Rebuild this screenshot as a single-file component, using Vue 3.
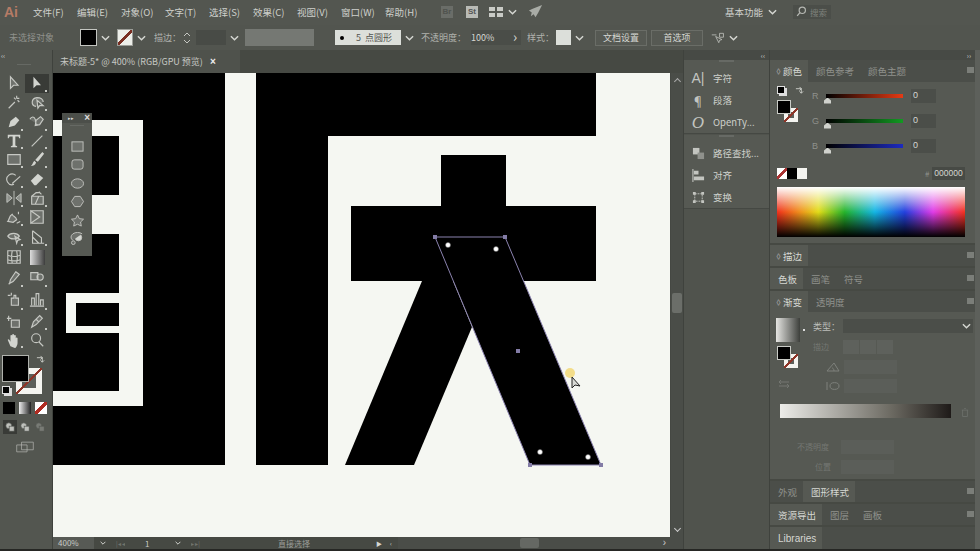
<script setup>
const menus = ['文件(F)','编辑(E)','对象(O)','文字(T)','选择(S)','效果(C)','视图(V)','窗口(W)','帮助(H)']
const shapes = ['rect', 'round', 'ell', 'hex', 'star', 'flare']
const rowHeights = [18.5, 19.5, 19.5, 18.5, 18.5, 20, 19.5, 18.5, 20.5, 20.5, 20.5, 22.5, 20.5, 18]
const toolRows = rowHeights.map((h) => h + 'px').join(' ')
const tools = [
  { d: 'M5 2v13l3.500-3.500h5z', g: 1 },
  { d: 'M5 2v13l3.500-3.500h5z', f: 1, on: 1, m: 1 },
  { d: 'M3 16L10 9M12 2v3M15 5h-3M15 9l-2-2M9 4l2 2', m: 0 },
  { d: 'M8 14c-6-1-6-9 1-10 4 0 7 2 7 5M9 7l1 9 2-3 4 0z', g: 1, m: 1 },
  { d: 'M3 15l2-7 6-5 4 4-5 6zM1 17l3-3', f: 1, m: 1 },
  { d: 'M1 6c2-4 5-3 6 0s0 7 3 6M7 13l1-6 5-4 3 3-4 6z', g: 1, m: 1 },
  { d: 'M2 2h14v4h-1l-1-2h-3.500v10l2 1v1h-7v-1l2-1V4H4L3 6H2z', f: 1, m: 1 },
  { d: 'M3 15L15 3', m: 1 },
  { d: 'M2 4h14v11H2z', g: 1, m: 1 },
  { d: 'M15 1l2 2-7 9-3-2zM6 11l2 2c-1 3-3 4-6 4 2-1 2-4 4-6z', f: 1, m: 1 },
  { d: 'M9 15a6 6 0 1 1 2-10M7 14l9-8', m: 1 },
  { d: 'M2 11l8-8 6 5-8 8H6z', f: 1, m: 1 },
  { d: 'M1 4l6 5-6 5zM9 1v16M17 4l-6 5 6 5z', r: 1, m: 1 },
  { d: 'M3 7h13v9H3zM3 7l5-4h4M11 7l-4 9M11 2l3 3', g: 1, m: 1 },
  { d: 'M2 14c2-2 1-6 5-8 1 3 4 2 5 6l-4 3zM14 3v3M12 16l4-2', g: 1, m: 1 },
  { d: 'M2 2h14v14H2zM2 2l10 7-10 7z', g: 1 },
  { d: 'M2 8a7 5 0 0 1 13 0 7 5 0 0 1-13 0zM10 8l6 4-3 1-1 3z', g: 1, m: 1 },
  { d: 'M4 2v14h13M4 2l10 8v6M4 9l7 7', m: 1 },
  { d: 'M2 2h14v14H2zM2 7c5 2 9 2 14 0M2 12c5 2 9 2 14 0M7 2c-1 5-1 9 0 14M12 2c1 5 1 9 0 14' },
  { grad: 1 },
  { d: 'M11 2l4 3-7 8-4 2 1-4zM3 16l2-2', g: 1, m: 1 },
  { d: 'M2 3h8v8H2zM9 8a3.500 3.500 0 1 0 7 0 3.500 3.500 0 0 0-7 0z', g: 1, m: 1 },
  { d: 'M2 5h3M6 2v3M6 15V8h3V5h2v3h3v8H6z', g: 1, m: 1 },
  { d: 'M3 16V8h3v8M8 16V3h3v13M13 16v-6h3v6M1 17h16', m: 1 },
  { d: 'M1 6h5M3 3v6M6 8h9v8H6z', g: 1 },
  { d: 'M3 16l2-6 7-7 3 3-7 7zM8 7l3 3', g: 1, m: 1 },
  { d: 'M5 16L2 9c0-1 1-1 2 0l1 2V4c0-1 2-1 2 0v4-5c0-1 2-1 2 0v5-4c0-1 2-1 2 0v5-2c0-1 2-1 2 0v5c0 3-2 6-3 6z', f: 1, m: 1 },
  { c: 1, d: 'M11 11l5 5' },
]
</script>

<template>
  <div class="app">
    <header class="menubar">
      <span class="logo">Ai</span>
      <nav class="menus"><span v-for="m in menus" :key="m">{{ m }}</span></nav>
      <div class="bridge"><span class="br">Br</span><span class="st">St</span></div>
      <svg class="grid-ic" viewBox="0 0 14 10"><path d="M0 0h6v4H0zM8 0h6v4H8zM0 6h6v4H0zM8 6h6v4H8z" fill="#c9cbc6"/></svg>
      <svg class="chev" viewBox="0 0 10 6"><path d="M1 1l4 4 4-4" /></svg>
      <svg class="rocket" viewBox="0 0 16 16"><path d="M15 1L5 5 1 7l3 2-1 4 3-2 2 3 3-5z" fill="#a9aca6"/></svg>
      <div class="spring"></div>
      <span class="workspace">基本功能</span>
      <svg class="chev" viewBox="0 0 10 6"><path d="M1 1l4 4 4-4" /></svg>
      <div class="search">
        <svg viewBox="0 0 14 14"><circle cx="8" cy="5.500" r="4" fill="none" stroke="#b5b7b2" stroke-width="1.500"/><path d="M5 8.500L1.500 12.500" stroke="#b5b7b2" stroke-width="1.700"/></svg>
        <span>搜索</span>
      </div>
    </header>

    <div class="control">
      <span class="c-label none-label">未选择对象</span>
      <span class="swatch-fill"></span>
      <svg class="chev" viewBox="0 0 10 6"><path d="M1 1l4 4 4-4" /></svg>
      <span class="swatch-stroke"></span>
      <svg class="chev" viewBox="0 0 10 6"><path d="M1 1l4 4 4-4" /></svg>
      <span class="c-label stroke-l">描边：</span>
      <svg class="stepper" viewBox="0 0 8 14"><path d="M1 5l3-3 3 3M1 9l3 3 3-3" /></svg>
      <span class="stroke-box"></span>
      <svg class="chev" viewBox="0 0 10 6"><path d="M1 1l4 4 4-4" /></svg>
      <span class="profile"></span>
      <span class="brush"><i></i>5&nbsp;&nbsp;点圆形</span>
      <svg class="chev" viewBox="0 0 10 6"><path d="M1 1l4 4 4-4" /></svg>
      <span class="c-label op-l">不透明度：</span>
      <span class="opacity">100%</span>
      <span class="op-arrow">›</span>
      <span class="c-label style-l">样式：</span>
      <span class="style-sw"></span>
      <svg class="chev" viewBox="0 0 10 6"><path d="M1 1l4 4 4-4" /></svg>
      <button class="btn doc">文档设置</button>
      <button class="btn pref">首选项</button>
      <svg class="align-ic" viewBox="0 0 18 14"><path d="M1 3h6M11 1h5v5h-5zM6 5l8 4-3 1-1 3z" fill="none" stroke="#c5c7c2"/></svg>
      <svg class="chev" viewBox="0 0 10 6"><path d="M1 1l4 4 4-4" /></svg>
    </div>

    <div class="main">
      <aside class="toolbar">
        <div class="collapse">‹‹<i></i></div>
        <div class="tools" :style="{ gridTemplateRows: toolRows }">
          <span v-for="(t, i) in tools" :key="i" class="tool" :class="{ active: t.on, more: t.m }">
            <span v-if="t.grad" class="mini-grad"></span>
            <svg v-else viewBox="0 0 18 18" :class="{ solid: t.f, grey: t.g, half: t.r }">
              <circle v-if="t.c" cx="8" cy="7" r="5" />
              <path :d="t.d" />
            </svg>
          </span>
        </div>
        <div class="fs-area">
          <span class="big-fill"></span>
          <span class="big-stroke"></span>
          <span class="mini-default"></span>
          <svg class="swap" viewBox="0 0 10 10"><path d="M1 3h6v5M5 1l2 2-2 2M5 6l2 2 2-2" /></svg>
        </div>
        <div class="mode-row">
          <span class="m-black"></span><span class="m-grad"></span><span class="m-none"></span>
        </div>
        <div class="draw-row">
          <span class="dm active"><svg viewBox="0 0 12 12"><circle cx="4.500" cy="4.500" r="3.500" /><rect x="5" y="5" width="6" height="6" /></svg></span>
          <span class="dm"><svg viewBox="0 0 12 12"><circle cx="4.500" cy="4.500" r="3.500" /><rect x="5" y="5" width="6" height="6" /></svg></span>
          <span class="dm dim"><svg viewBox="0 0 12 12"><circle cx="4.500" cy="4.500" r="3.500" /><rect x="5" y="5" width="6" height="6" /></svg></span>
        </div>
        <svg class="screen-ic" viewBox="0 0 26 16"><path d="M8 1h17v11H8zM1 5h15v10H1z" /></svg>
      </aside>

      <section class="doc-col">
        <div class="tab-row">
          <div class="tab"><span>未标题-5* @ 400% (RGB/GPU 预览)</span><b>×</b></div>
        </div>
        <div class="canvas-row">
          <div class="canvas">
            <svg class="art" viewBox="0 0 617 464">
              <rect width="617" height="464" fill="#f5f7f2" />
              <rect width="172" height="392" fill="#000" />
              <g fill="#f5f7f2">
                <rect y="47" width="90" height="16" />
                <rect x="66" y="47" width="24" height="286" />
                <rect y="318" width="90" height="15" />
                <rect x="13" y="122" width="53" height="39" />
                <rect x="13" y="220" width="53" height="40" />
              </g>
              <rect x="23" y="230" width="43" height="23" fill="#000" />
              <path d="M203 0H543V63H275V392H203Z" fill="#000" />
              <path d="M388 82H453V133H543V208H298V133H388Z" fill="#000" />
              <path d="M369 208L292 392H361L419 254L400 208Z" fill="#000" />
              <path d="M382 164H452L548 392H477Z" fill="#000" />
              <path d="M382 164H452L548 392H477Z" fill="none" stroke="#8a82ae" />
              <g fill="#837ca6">
                <rect x="380" y="162" width="4" height="4" /><rect x="450" y="162" width="4" height="4" />
                <rect x="475" y="390" width="4" height="4" /><rect x="546" y="390" width="4" height="4" />
                <rect x="463" y="276" width="4" height="4" />
              </g>
              <g fill="#fff" stroke="#555" stroke-width=".5">
                <circle cx="395" cy="172" r="2.500" /><circle cx="443" cy="176" r="2.500" />
                <circle cx="487" cy="379" r="2.500" /><circle cx="535" cy="384" r="2.500" />
              </g>
              <circle cx="517" cy="300" r="5" fill="#f2d878" opacity=".85" />
              <path d="M519 304l0 11 3-3 5 1z" fill="#d8dad5" stroke="#222" />
            </svg>
            <div class="float-tools">
              <div class="float-head"><span>▸▸</span><b>×</b></div>
              <div class="float-grip"></div>
              <span v-for="k in shapes" :key="k" class="shape">
                <svg viewBox="0 0 16 14">
                  <rect v-if="k === 'rect'" x="2" y="2" width="12" height="10" />
                  <rect v-else-if="k === 'round'" x="2" y="2" width="12" height="10" rx="2.500" />
                  <ellipse v-else-if="k === 'ell'" cx="8" cy="7" rx="6.500" ry="5" />
                  <path v-else-if="k === 'hex'" d="M5 1.500h6l3.500 5.500-3.500 5.500H5L1.500 7z" />
                  <path v-else-if="k === 'star'" d="M8 1l2 4 4.500.6-3.200 3 .8 4.400-4.100-2-4.100 2 .8-4.400-3.200-3L6 5z" />
                  <g v-else><circle class="flare-c" cx="9" cy="6" r="3.500" /><circle cx="3.500" cy="11.500" r="2" /><path d="M3 9a7 5 0 0 1 10-7" /></g>
                </svg>
              </span>
            </div>
          </div>
          <div class="v-scroll"><i class="up"></i><i class="thumb"></i><i class="down"></i></div>
        </div>
        <footer class="status">
          <span class="zoom-val">400%</span>
          <svg class="chev" viewBox="0 0 10 6"><path d="M1 1l4 4 4-4" /></svg>
          <span class="pg dim">|◂ ◂</span>
          <span class="pgn">1</span>
          <svg class="chev" viewBox="0 0 10 6"><path d="M1 1l4 4 4-4" /></svg>
          <span class="pg dim">▸ ▸|</span>
          <span class="st-label">直接选择</span>
          <span class="pg play">▶</span>
          <span class="pg">‹</span>
          <div class="h-scroll"><i></i><b>›</b></div>
        </footer>
      </section>

      <aside class="dock1">
        <div class="dock-head"><span>‹‹</span></div>
        <div class="d-group">
          <div class="grip"></div>
          <div class="d-item"><span class="d-ic sans">A|</span><span>字符</span></div>
          <div class="d-item"><span class="d-ic">¶</span><span>段落</span></div>
          <div class="d-item"><span class="d-ic serif it">O</span><span>OpenTy...</span></div>
        </div>
        <div class="d-group">
          <div class="grip"></div>
          <div class="d-item"><span class="d-ic"><svg viewBox="0 0 14 14"><path d="M1 1h7v7H1z" fill="#c3c5c0"/><path d="M6 6h7v7H6z" fill="#8f918c"/></svg></span><span>路径查找...</span></div>
          <div class="d-item"><span class="d-ic"><svg viewBox="0 0 14 14"><path d="M1 0v14" stroke="#d2d4cf"/><path d="M2 2h5v4H2zM2 8h11v4H2z" fill="#c3c5c0"/></svg></span><span>对齐</span></div>
          <div class="d-item"><span class="d-ic"><svg viewBox="0 0 14 14"><path d="M3 3h8v8H3z" fill="none" stroke="#c3c5c0" stroke-dasharray="2 1"/><path d="M1 1h3v3H1zM10 1h3v3h-3zM1 10h3v3H1zM10 10h3v3h-3z" fill="#c3c5c0"/></svg></span><span>变换</span></div>
        </div>
      </aside>

      <aside class="dock2">
        <div class="dock-head"><span>››</span></div>
        <div class="panel color">
          <div class="p-tabs">
            <span class="p-tab on"><em>◊</em>颜色</span><span class="p-tab">颜色参考</span><span class="p-tab">颜色主题</span><i class="menu-ic"></i>
          </div>
          <div class="color-body">
            <div class="color-top">
              <div class="c-swatches">
                <span class="mini-default sm"></span>
                <svg class="swap sm" viewBox="0 0 10 10"><path d="M1 3h6v5M5 1l2 2-2 2M5 6l2 2 2-2" /></svg>
                <span class="p-stroke"></span>
                <span class="p-fill"></span>
              </div>
              <div class="sliders">
                <div class="slider"><label>R</label><div class="track r"><i></i></div><span class="val">0</span></div>
                <div class="slider"><label>G</label><div class="track g"><i></i></div><span class="val">0</span></div>
                <div class="slider"><label>B</label><div class="track b"><i></i></div><span class="val">0</span></div>
              </div>
            </div>
            <div class="hex-row">
              <span class="qs q-none"></span><span class="qs q-black"></span><span class="qs q-white"></span>
              <span class="hash">#</span><span class="hex">000000</span>
            </div>
            <div class="spectrum"><div class="sp-white"></div><div class="sp-black"></div></div>
          </div>
        </div>
        <div class="panel single"><div class="p-tabs"><span class="p-tab on"><em>◊</em>描边</span><i class="menu-ic"></i></div></div>
        <div class="panel single"><div class="p-tabs"><span class="p-tab on">色板</span><span class="p-tab">画笔</span><span class="p-tab">符号</span><i class="menu-ic"></i></div></div>
        <div class="panel grad">
          <div class="p-tabs"><span class="p-tab on"><em>◊</em>渐变</span><span class="p-tab">透明度</span><i class="menu-ic"></i></div>
          <div class="grad-body">
            <span class="g-sample"></span><i class="g-dot"></i>
            <span class="p-stroke gs"></span><span class="p-fill gs"></span>
            <div class="type-row"><span>类型：</span><div class="type-box"><svg class="chev" viewBox="0 0 10 6"><path d="M1 1l4 4 4-4" /></svg></div></div>
            <div class="dim-row r1"><span>描边</span><i></i><i></i><i></i></div>
            <div class="dim-row r2"><svg viewBox="0 0 14 10"><path d="M1 9h12L8 1zM8 9c0-2-1-3-2-3" /></svg><i class="wide"></i></div>
            <div class="dim-row r3"><svg viewBox="0 0 14 10"><path d="M1 1v8M4 5a4 3 0 0 1 9 0 4 3 0 0 1-9 0z" /></svg><i class="wide"></i></div>
            <svg class="rev-ic" viewBox="0 0 12 10"><path d="M1 3h10M1 7h10M3 1L1 3l2 2M9 5l2 2-2 2" /></svg>
            <div class="g-bar"></div>
            <svg class="trash" viewBox="0 0 10 12"><path d="M1 3h8M2 3v8h6V3M4 1h2" /></svg>
            <div class="dim-row r4"><span>不透明度</span><i class="wide"></i></div>
            <div class="dim-row r5"><span>位置</span><i class="wide"></i></div>
          </div>
        </div>
        <div class="panel single"><div class="p-tabs"><span class="p-tab">外观</span><span class="p-tab on">图形样式</span><i class="menu-ic"></i></div></div>
        <div class="panel single"><div class="p-tabs"><span class="p-tab on">资源导出</span><span class="p-tab">图层</span><span class="p-tab">画板</span><i class="menu-ic"></i></div></div>
        <div class="panel last"><div class="p-tabs"><span class="p-tab on lib">Libraries</span></div></div>
      </aside>
    </div>
  </div>
</template>

<style>
html, body { margin: 0; background: #50534e; overflow: hidden; }
</style>

<style scoped>
.app { width: 980px; height: 551px; box-sizing: border-box; border-bottom: 2px solid #262724; display: flex; flex-direction: column; background: #535650; color: #c8cac5; font: 10px "Noto Sans CJK SC", "Liberation Sans", sans-serif; overflow: hidden; }
svg { display: block; }
.chev { width: 9px; height: 6px; flex: none; fill: none; stroke: #d5d7d2; stroke-width: 1.600; }

.menubar { height: 25px; box-sizing: border-box; padding: 0 0 2px 4px; flex: none; display: flex; align-items: center; background: #535650; }
.logo { width: 24px; color: #b57b66; font: bold 14px "Liberation Sans", sans-serif; }
.menus { display: flex; gap: 13px; margin-left: 5px; font-size: 9.500px; color: #cfd1cc; white-space: nowrap; }
.menus span { width: 31px; }
.bridge { display: flex; gap: 13px; margin-left: 25px; }
.br, .st { width: 12px; height: 12px; font: bold 8px/12px "Liberation Sans", sans-serif; text-align: center; }
.br { background: #6a6d68; color: #50534e; }
.st { background: #b9bbb6; color: #555; }
.grid-ic { width: 14px; height: 10px; margin-left: 11px; }
.menubar > .chev { margin-left: 5px; }
.rocket { width: 15px; height: 15px; margin-left: 11px; }
.spring { flex: 1; }
.workspace { font-size: 9.500px; color: #d0d2cd; }
.search { width: 38px; height: 14px; margin: 0 149px 0 16px; display: flex; align-items: center; gap: 3px; padding-left: 3px; box-sizing: border-box; background: #4b4e49; color: #7e817b; font-size: 8.500px; white-space: nowrap; }
.search svg { width: 11px; height: 11px; flex: none; }

.control { height: 25px; flex: none; display: flex; align-items: center; background: #52554f; font-size: 9px; box-shadow: 0 1px 0 #464944; white-space: nowrap; }
.c-label { color: #b0b2ad; }
.none-label { margin-left: 9px; color: #8f918c; width: 71px; }
.swatch-fill { width: 15px; height: 15px; background: #000; border: 1px solid #c4c6c1; }
.control > .chev { margin-left: 4px; }
.swatch-stroke { width: 14px; height: 15px; margin-left: 7px; background: linear-gradient(to bottom right, transparent 43%, #7a2f23 43% 57%, transparent 57%), #eceee9; border: 1px solid #9b9d98; }
.stroke-l { margin-left: 8px; }
.stepper { width: 8px; height: 14px; margin-left: 2px; fill: none; stroke: #c5c7c2; }
.stroke-box { width: 30px; height: 15px; margin-left: 5px; background: #484b46; }
.profile { width: 69px; height: 17px; margin-left: 6px; background: #757873; }
.brush { width: 66px; height: 15px; margin-left: 21px; display: flex; align-items: center; gap: 12px; padding-left: 5px; box-sizing: border-box; background: #dcdfda; color: #52544f; }
.brush i { width: 4px; height: 4px; border-radius: 50%; background: #000; }
.op-l { margin-left: 7px; }
.opacity { width: 38px; height: 15px; line-height: 15px; margin-left: 5px; color: #d5d7d2; background: #4a4d48; }
.op-arrow { width: 12px; height: 15px; font-size: 14px; line-height: 13px; color: #ddd; text-align: center; background: #4a4d48; }
.style-l { margin-left: 6px; }
.style-sw { width: 15px; height: 15px; margin-left: 2px; background: #dcdfda; }
.btn { width: 52px; height: 16px; padding: 0; margin-left: 11px; font: 9px "Noto Sans CJK SC", sans-serif; color: #d5d7d2; background: #565953; border: 1px solid #6a6d67; }
.pref { margin-left: 4px; }
.align-ic { width: 14px; height: 12px; margin-left: 8px; }

.main { flex: 1; min-height: 0; display: flex; }

.toolbar { width: 53px; flex: none; background: #535650; border-right: 1px solid #3f423d; box-sizing: border-box; display: flex; flex-direction: column; }
.collapse { position: relative; height: 24px; flex: none; padding: 1px 0 0 1px; box-sizing: border-box; font-size: 7px; line-height: 8px; color: #ccc; }
.collapse i { position: absolute; left: 17px; top: 14px; width: 14px; height: 1px; background: #666964; }
.tools { display: grid; grid-template-columns: 23px 24px; padding-left: 2px; }
.tool { position: relative; display: flex; align-items: center; justify-content: center; }
.tool.more::after { content: ""; position: absolute; right: 2px; bottom: 1px; width: 2px; height: 2px; background: #c6c8c3; }
.tool.active { background: #393b37; }
.tool svg { width: 16px; height: 16px; fill: none; stroke: #c6c8c3; stroke-width: 1.300; }
.tool svg.solid { fill: #d2d4cf; stroke: none; }
.tool svg.grey { fill: #6e716c; }
.tool svg.half { fill: #8e918c; stroke-width: 1; }
.mini-grad { width: 15px; height: 15px; background: linear-gradient(90deg, #ddd, #3d3d3d); }
.fs-area { position: relative; height: 53px; flex: none; }
.big-fill { position: absolute; left: 2px; top: 6px; z-index: 1; width: 25px; height: 25px; background: #000; border: 1px solid #b0b2ad; }
.big-stroke { position: absolute; left: 16px; top: 19px; width: 26px; height: 26px; background: linear-gradient(to bottom right, transparent 47%, #8d3427 47% 53%, transparent 53%), linear-gradient(#5c5f5a, #5c5f5a) center / 14px 14px no-repeat, #f4f4f0; }
.mini-default { position: absolute; left: 2px; top: 37px; width: 6px; height: 6px; background: #000; border: 1px solid #ddd; box-shadow: 2px 2px 0 #ddd; }
.swap { position: absolute; left: 36px; top: 6px; width: 9px; height: 9px; fill: none; stroke: #cfd1cc; }
.mode-row { display: flex; gap: 4px; padding-left: 3px; height: 12px; flex: none; }
.mode-row span { width: 12px; height: 12px; }
.m-black { background: #000; }
.m-grad { background: linear-gradient(90deg, #eee, #222); }
.m-none { background: linear-gradient(to bottom right, #fff 40%, #b02c22 40% 60%, #fff 60%); }
.draw-row { display: flex; margin: 6px 0 0 3px; gap: 1px; flex: none; }
.dm { width: 14px; height: 14px; display: flex; align-items: center; justify-content: center; }
.dm.active { background: #393b37; }
.dm svg { width: 10px; height: 10px; fill: #bfc1bc; stroke: #50534e; stroke-width: .8; }
.dm.dim svg { opacity: .35; }
.screen-ic { width: 18px; height: 12px; flex: none; margin: 7px 0 0 16px; fill: #565953; stroke: #b5b7b2; }

.doc-col { width: 630px; flex: none; display: flex; flex-direction: column; min-width: 0; }
.tab-row { height: 23px; flex: none; display: flex; background: #464943; }
.tab { width: 187px; display: flex; align-items: center; gap: 7px; padding-left: 7px; box-sizing: border-box; background: #4f524c; color: #c6c8c3; font-size: 9px; white-space: nowrap; }
.tab b { color: #eee; font: bold 10px "Liberation Sans", sans-serif; }
.canvas-row { height: 464px; flex: none; display: flex; }
.canvas { position: relative; width: 617px; height: 464px; flex: none; overflow: hidden; }
.art { width: 617px; height: 464px; }
.v-scroll { position: relative; flex: 1; background: #4a4d48; border-left: 1px solid #454843; }
.v-scroll i { position: absolute; }
.v-scroll .thumb { left: 1px; top: 220px; width: 10px; height: 20px; background: #6b6e69; border-radius: 2px; }
.v-scroll .up { top: 6px; left: 4px; width: 4px; height: 4px; border-left: 1px solid #aaa; border-top: 1px solid #aaa; transform: rotate(45deg); }
.v-scroll .down { bottom: 6px; left: 4px; width: 4px; height: 4px; border-right: 1px solid #ccc; border-bottom: 1px solid #ccc; transform: rotate(45deg); }

.float-tools { position: absolute; left: 9px; top: 40px; width: 30px; height: 143px; background: #565953; border-radius: 3px 3px 0 0; display: flex; flex-direction: column; align-items: center; }
.float-head { width: 100%; height: 10px; flex: none; display: flex; justify-content: space-between; padding: 0 2px 0 6px; box-sizing: border-box; background: #4c4f4a; font-size: 5px; line-height: 10px; color: #ddd; }
.float-head b { font: bold 10px/10px "Liberation Sans", sans-serif; }
.float-grip { width: 14px; height: 1px; margin: 2px 0 11px; background: #666964; }
.shape { height: 18.500px; display: flex; align-items: center; }
.shape svg { width: 15px; height: 13px; fill: #6e716c; stroke: #c2c4bf; stroke-width: 1; }
.flare-c { fill: #d5d7d2; }

.status { height: 12px; flex: none; display: flex; align-items: center; background: #464943; font-size: 8px; color: #c8cac5; white-space: nowrap; }
.zoom-val { width: 41px; padding-left: 5px; box-sizing: border-box; background: #575a55; height: 100%; line-height: 12px; }
.status .chev { width: 6px; height: 4px; margin-left: 6px; }
.pg { font-size: 6px; color: #d5d7d2; }
.pg.dim { opacity: .3; margin-left: 10px; width: 24px; }
.pgn { width: 24px; margin-left: 5px; }
.st-label { width: 60px; margin-left: 49px; color: #9c9e99; text-align: center; }
.play { margin-left: 52px; }
.status .play + .pg { margin-left: 8px; }
.h-scroll { position: relative; flex: 1; height: 100%; margin-left: 6px; background: #4a4d48; }
.h-scroll i { position: absolute; left: 122px; top: 1px; width: 19px; height: 10px; background: #656863; border-radius: 2px; }
.h-scroll b { position: absolute; left: 265px; top: 0; font: 10px/11px "Liberation Sans", sans-serif; color: #ccc; }

.dock-head { height: 10px; flex: none; display: flex; justify-content: flex-end; padding-right: 4px; background: #474a45; font-size: 7px; line-height: 10px; color: #ccc; }
.dock1 { width: 87px; flex: none; box-sizing: border-box; border-left: 1px solid #3f423d; border-right: 1px solid #3f423d; background: #50534d; }
.d-group { background: #565953; border-bottom: 1px solid #454843; }
.grip { width: 15px; height: 2px; margin: 0 auto 5px; background: #676a65; }
.d-group + .d-group .grip { margin-top: 1px; }
.d-item { height: 22px; display: flex; align-items: center; gap: 8px; padding-left: 7px; font-size: 9.500px; color: #cfd1cc; white-space: nowrap; }
.d-ic { width: 14px; display: flex; justify-content: center; font-size: 13px; color: #c3c5c0; line-height: 1; }
.d-ic svg { width: 13px; height: 13px; }
.sans { font: 14px/1 "Liberation Sans", sans-serif; }
.serif { font-family: "Liberation Serif", serif; }
.it { font-style: italic; font-size: 17px; }

.dock2 { flex: 1; min-width: 0; display: flex; flex-direction: column; gap: 2px; background: #464943; border-right: 5px solid #5d605b; box-sizing: border-box; }
.dock2 .dock-head { margin-bottom: -2px; }
.panel { background: #565953; }
.p-tabs { position: relative; display: flex; height: 21px; background: #4b4e49; font-size: 9.500px; color: #8f918c; white-space: nowrap; }
.p-tab { display: flex; align-items: center; padding: 0 6px 0 8px; }
.p-tab.on { color: #d5d7d2; background: #565953; }
.p-tab em { font-style: normal; font-size: 7px; width: 8px; margin-left: -3px; color: #aaa; }
.lib { font: 10px "Liberation Sans", sans-serif; padding: 0 6px 0 8px; }
.menu-ic { position: absolute; right: 1px; top: 7px; width: 7px; height: 6px; background: #7b7e79; }
.color { height: 183px; flex: none; }
.color .p-tabs { height: 22px; }
.color-body { padding: 4px 0 0 7px; }
.color-top { display: flex; height: 81px; }
.c-swatches { position: relative; width: 33px; height: 60px; flex: none; }
.mini-default.sm { left: 0; top: 0; width: 6px; height: 6px; }
.swap.sm { left: 18px; top: 0; }
.p-fill { position: absolute; left: 0; top: 14px; z-index: 1; width: 12px; height: 12px; background: #000; border: 1px solid #c9cbc6; }
.p-stroke { position: absolute; left: 7px; top: 22px; width: 14px; height: 14px; background: linear-gradient(to bottom right, transparent 43%, #8d3427 43% 57%, transparent 57%), linear-gradient(#5c5f5a, #5c5f5a) center / 6px 6px no-repeat, #f4f4f0; }
.sliders { width: 158px; display: flex; flex-direction: column; gap: 6px; }
.slider { display: flex; align-items: center; height: 19px; }
.slider label { width: 14px; margin-left: 2px; color: #8f918c; font: 9px "Liberation Sans", sans-serif; }
.track { position: relative; width: 77px; height: 4px; }
.track i { position: absolute; left: -2px; top: 4px; width: 7px; height: 6px; background: #d0d2cd; clip-path: polygon(50% 0, 100% 50%, 100% 100%, 0 100%, 0 50%); }
.track.r { background: linear-gradient(90deg, #000, #e63a14); }
.track.g { background: linear-gradient(90deg, #000, #129a22); }
.track.b { background: linear-gradient(90deg, #000, #1d2bc0); }
.val { width: 25px; height: 14px; margin-left: 8px; padding-left: 2px; box-sizing: border-box; background: #4b4e49; color: #d5d7d2; font: 9px/13px "Liberation Sans", sans-serif; }
.hex-row { display: flex; align-items: center; height: 13px; }
.qs { width: 10px; height: 11px; }
.q-none { background: linear-gradient(to bottom right, #fff 40%, #a33 40% 60%, #fff 60%); }
.q-black { background: #000; }
.q-white { background: #f4f4f0; }
.hash { margin-left: 118px; width: 7px; color: #8f918c; font-size: 8px; }
.hex { width: 33px; height: 13px; background: #474a45; color: #d5d7d2; font: 8.500px/13px "Liberation Sans", sans-serif; text-align: center; }
.spectrum { position: relative; width: 188px; height: 50px; margin-top: 7px; overflow: hidden; background: linear-gradient(90deg, #f0301c 0%, #ef8f1c 12%, #e2dc18 22%, #25b42c 36%, #14b6e4 52%, #2340de 68%, #e03ce8 83%, #f4321e 100%); }
.sp-white { position: absolute; inset: 0 0 50% 0; background: linear-gradient(#fff, rgba(255, 255, 255, 0)); }
.sp-black { position: absolute; inset: 50% 0 0 0; background: linear-gradient(rgba(0, 0, 0, 0), #000); }
.single { flex: none; }
.grad { height: 188px; flex: none; }
.grad-body { position: relative; height: 167px; }
.g-sample { position: absolute; left: 6px; top: 6px; width: 24px; height: 24px; background: linear-gradient(90deg, #e5e5e2, #3d3f3b); }
.g-dot { position: absolute; left: 33px; top: 17px; width: 2px; height: 2px; background: #ddd; }
.p-fill.gs { left: 7px; top: 34px; }
.p-stroke.gs { left: 14px; top: 42px; }
.type-row { position: absolute; left: 43px; top: 6px; width: 160px; height: 16px; display: flex; align-items: center; color: #bcbeb9; font-size: 9px; }
.type-row span { width: 30px; flex: none; }
.type-box { flex: 1; height: 14px; display: flex; align-items: center; justify-content: flex-end; padding-right: 2px; background: #4b4e49; }
.dim-row { position: absolute; display: flex; align-items: center; gap: 1px; font-size: 8px; color: #747772; height: 15px; white-space: nowrap; }
.dim-row svg { width: 14px; height: 10px; margin-right: 3px; fill: none; stroke: #7e817c; }
.dim-row i { width: 16px; height: 14px; background: #5e615c; }
.dim-row i.wide { width: 53px; height: 14px; background: #5b5e59; }
.r1 { left: 43px; top: 27px; }
.r1 span { width: 29px; }
.r2 { left: 56px; top: 47px; }
.r3 { left: 56px; top: 66px; }
.rev-ic { position: absolute; left: 8px; top: 67px; width: 12px; height: 10px; fill: none; stroke: #747772; }
.r4 { left: 27px; top: 127px; }
.r4 span { width: 43px; }
.r5 { left: 45px; top: 147px; }
.r5 span { width: 25px; }
.g-bar { position: absolute; left: 10px; top: 92px; width: 171px; height: 14px; background: linear-gradient(90deg, #ecece8, #6c6a62 65%, #1e1a18); }
.trash { position: absolute; left: 191px; top: 95px; width: 8px; height: 11px; fill: none; stroke: #6f726d; }
.last { flex: 1; }
.last .p-tabs { height: 100%; }
</style>
